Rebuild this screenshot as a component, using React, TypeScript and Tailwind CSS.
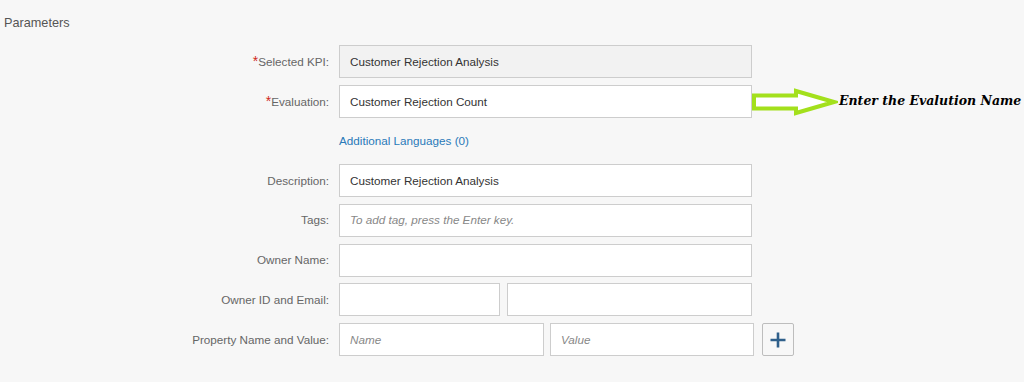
import React from "react";

const font = { fontFamily: '"Liberation Sans", Arial, sans-serif' };

function Label({ children, req }: { children: React.ReactNode; req?: boolean }) {
  return (
    <div className="w-[329px] shrink-0 text-right text-[11.7px] text-[#666]">
      {req && <span className="text-[#d0271d] text-[14px] leading-none">*</span>}
      {children}
    </div>
  );
}

function Input({ w, value, placeholder, disabled }: { w: string; value?: string; placeholder?: string; disabled?: boolean }) {
  return (
    <div
      className={`${w} h-[33px] shrink-0 border border-[#cdcdcd] flex items-center pl-[10px] text-[11.7px] ${
        disabled ? "bg-[#f2f2f2]" : "bg-white"
      }`}
    >
      {value ? (
        <span className="text-[#333]">{value}</span>
      ) : placeholder ? (
        <span className="text-[#888] italic">{placeholder}</span>
      ) : null}
    </div>
  );
}

export default function App() {
  return (
    <div className="w-[1024px] h-[382px] bg-[#f7f7f7] overflow-hidden" style={font}>
      <div className="pl-[4px] pt-[15px] text-[12.7px] text-[#555] leading-[16px]">Parameters</div>
      <div className="mt-[14px] flex flex-col">
        <div className="flex items-center gap-[10px]">
          <Label req>Selected KPI:</Label>
          <Input w="w-[413px]" value="Customer Rejection Analysis" disabled />
        </div>
        <div className="flex items-center gap-[10px] mt-[7px]">
          <Label req>Evaluation:</Label>
          <Input w="w-[413px]" value="Customer Rejection Count" />
          <div className="flex items-center -ml-[10px]">
            <svg width="86" height="30" viewBox="0 0 86 30" className="shrink-0">
              <polygon
                points="2,8.5 44,8.5 44,4 82,15 44,26 44,21.5 2,21.5"
                fill="#ffffff"
                stroke="#a3e01c"
                strokeWidth="4"
                strokeLinejoin="miter"
              />
            </svg>
            <span
              className="text-[12.5px] font-bold italic text-black whitespace-nowrap ml-[1px]"
              style={{ fontFamily: '"DejaVu Serif", "Liberation Serif", serif' }}
            >
              Enter the Evalution Name
            </span>
          </div>
        </div>
        <div className="flex items-center gap-[10px] h-[46px]">
          <div className="w-[329px] shrink-0" />
          <span className="text-[11.7px] text-[#2a7ab9]">Additional Languages (0)</span>
        </div>
        <div className="flex flex-col gap-[6.75px]">
          <div className="flex items-center gap-[10px]">
            <Label>Description:</Label>
            <Input w="w-[413px]" value="Customer Rejection Analysis" />
          </div>
          <div className="flex items-center gap-[10px]">
            <Label>Tags:</Label>
            <Input w="w-[413px]" placeholder="To add tag, press the Enter key." />
          </div>
          <div className="flex items-center gap-[10px]">
            <Label>Owner Name:</Label>
            <Input w="w-[413px]" />
          </div>
          <div className="flex items-center gap-[10px]">
            <Label>Owner ID and Email:</Label>
            <div className="flex gap-[7px]">
              <Input w="w-[161px]" />
              <Input w="w-[245px]" />
            </div>
          </div>
          <div className="flex items-center gap-[10px]">
            <Label>Property Name and Value:</Label>
            <div className="flex gap-[6px] items-center">
              <Input w="w-[205px]" placeholder="Name" />
              <Input w="w-[204px]" placeholder="Value" />
              <div className="ml-[2px] w-[32px] h-[33px] border border-[#bdbdbd] rounded-[2px] bg-[#f7f7f7] flex items-center justify-center">
                <svg width="18" height="18" viewBox="0 0 18 18">
                  <path d="M9 1.5V16.5M1.5 9H16.5" stroke="#2f5f8a" strokeWidth="2.6" />
                </svg>
              </div>
            </div>
          </div>
        </div>
      </div>
    </div>
  );
}
